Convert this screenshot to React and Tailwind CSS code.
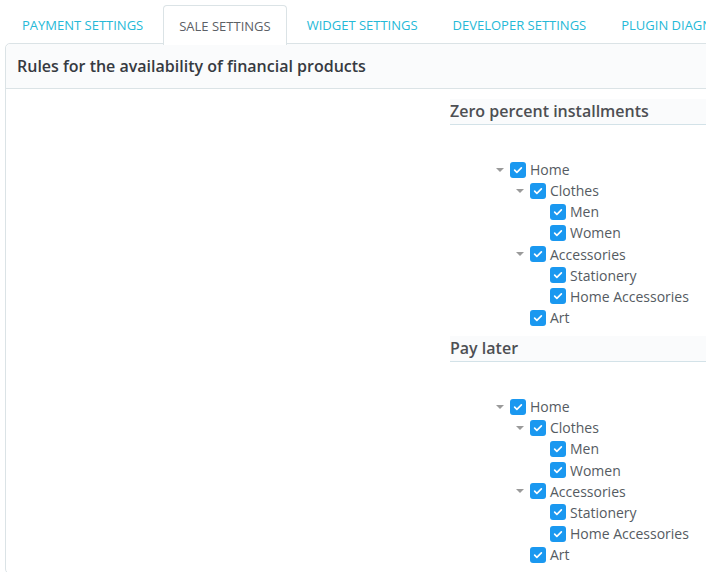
const TABS = [
  { label: 'PAYMENT SETTINGS' },
  { label: 'SALE SETTINGS', active: true },
  { label: 'WIDGET SETTINGS' },
  { label: 'DEVELOPER SETTINGS' },
  { label: 'PLUGIN DIAGNOSTICS' },
]

const TREE = [
  { label: 'Home', level: 0, caret: true },
  { label: 'Clothes', level: 1, caret: true },
  { label: 'Men', level: 2 },
  { label: 'Women', level: 2 },
  { label: 'Accessories', level: 1, caret: true },
  { label: 'Stationery', level: 2 },
  { label: 'Home Accessories', level: 2 },
  { label: 'Art', level: 1 },
]

const INDENT = ['pl-0', 'pl-[20px]', 'pl-[40px]']

function Checkbox() {
  return (
    <span className="w-4 h-4 rounded-[3px] bg-[#1a98f0] flex items-center justify-center shrink-0">
      <svg viewBox="0 0 16 16" className="w-3 h-3">
        <path d="M3.5 8.2l3 3 6-6" fill="none" stroke="white" strokeWidth="2.2" strokeLinecap="round" strokeLinejoin="round" />
      </svg>
    </span>
  )
}

function CategoryTree() {
  return (
    <ul className="ml-[46px]">
      {TREE.map((node, i) => (
        <li key={i} className={`flex items-center h-[21.15px] ${INDENT[node.level]}`}>
          <span className="w-[14px] h-4 flex items-center shrink-0">
            {node.caret && (
              <span className="w-0 h-0 border-l-[4px] border-r-[4px] border-t-[4px] border-l-transparent border-r-transparent border-t-[#9a9a9a]" />
            )}
          </span>
          <Checkbox />
          <span className="ml-1 text-[14px] text-[#555b62]">{node.label}</span>
        </li>
      ))}
    </ul>
  )
}

function Section({ title }) {
  return (
    <div>
      <h3 className="h-[26px] bg-[#fafbfc] border-b border-[#d3e2e8] text-[16px] leading-[25px] font-semibold text-[#4d4f53] whitespace-nowrap">
        {title}
      </h3>
      <div className="pt-[34px] pb-[8px]">
        <CategoryTree />
      </div>
    </div>
  )
}

export default function App() {
  return (
    <div className="w-[706px] h-[572px] overflow-hidden bg-white font-['Open_Sans',sans-serif]">
      <div className="flex gap-[5px] pl-[7px] pt-[5px] h-[44px] relative z-10">
        {TABS.map((tab) => (
          <div
            key={tab.label}
            className={
              tab.active
                ? 'px-[15px] pt-[2px] h-[40px] flex items-center text-[13px] text-[#5c6066] bg-white border border-b-0 border-[#dbe3e6] rounded-t-[4px] whitespace-nowrap'
                : 'px-[15px] pt-[2px] h-[39px] flex items-center text-[13px] text-[#25b9d7] whitespace-nowrap'
            }
          >
            {tab.label}
          </div>
        ))}
      </div>
      <div className="ml-[5px] -mt-px w-[720px] border border-[#dbe3e6] rounded-[5px] bg-white">
        <div className="h-[45px] px-[11px] flex items-center bg-[#fafbfc] border-b border-[#dbe3e6] rounded-t-[5px]">
          <h2 className="text-[16px] font-semibold text-[#363a41] whitespace-nowrap">
            Rules for the availability of financial products
          </h2>
        </div>
        <div className="grid grid-cols-[444px_1fr] pt-[10px]">
          <div />
          <div>
            <Section title="Zero percent installments" />
            <Section title="Pay later" />
          </div>
        </div>
      </div>
    </div>
  )
}
